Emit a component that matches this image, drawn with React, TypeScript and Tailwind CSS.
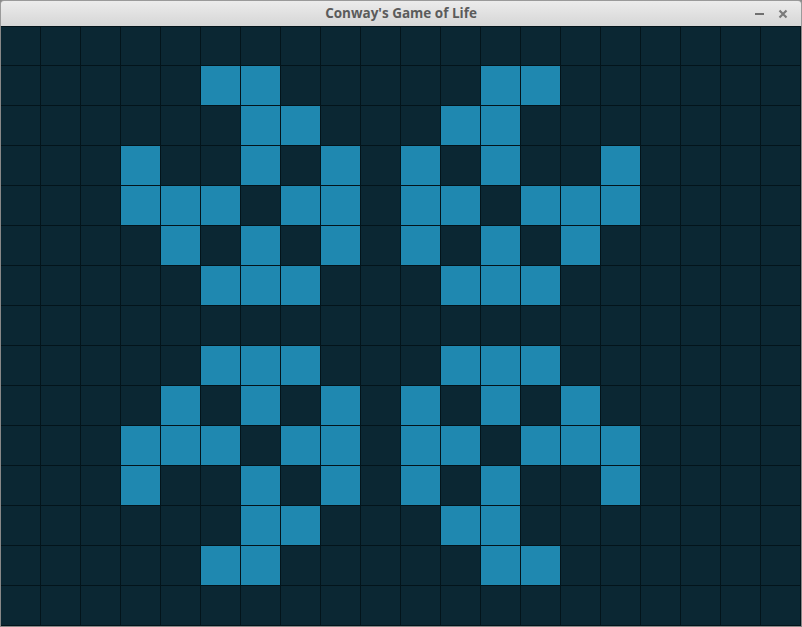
import React from "react";

const alive: Record<number, number[]> = {
  1: [5, 6, 12, 13],
  2: [6, 7, 11, 12],
  3: [3, 6, 8, 10, 12, 15],
  4: [3, 4, 5, 7, 8, 10, 11, 13, 14, 15],
  5: [4, 6, 8, 10, 12, 14],
  6: [5, 6, 7, 11, 12, 13],
  8: [5, 6, 7, 11, 12, 13],
  9: [4, 6, 8, 10, 12, 14],
  10: [3, 4, 5, 7, 8, 10, 11, 13, 14, 15],
  11: [3, 6, 8, 10, 12, 15],
  12: [6, 7, 11, 12],
  13: [5, 6, 12, 13],
};

export default function App() {
  const cells: React.ReactNode[] = [];
  for (let r = 0; r < 15; r++) {
    for (let c = 0; c < 20; c++) {
      const on = (alive[r] || []).includes(c);
      cells.push(
        <div key={`${r}-${c}`} className={on ? "bg-[#1f88b0]" : "bg-[#0b2733]"} />
      );
    }
  }
  return (
    <div className="w-[802px] h-[627px] flex flex-col bg-[#888] overflow-hidden">
      <div className="h-[26px] flex-none relative rounded-t-[4px] border-t border-x border-[#9a9a9a] bg-gradient-to-b from-[#ececec] to-[#d6d6d6] flex items-center justify-center">
        <span
          className="text-[13.5px] font-bold text-[#5b5b5b] leading-none"
          style={{ fontFamily: '"Open Sans", "DejaVu Sans", sans-serif' }}
        >
          Conway's Game of Life
        </span>
        <div className="absolute right-[13px] top-0 h-full flex items-center gap-[14px]">
          <div className="w-[9px] h-[2px] bg-[#707070] mt-[1px]" />
          <svg width="10" height="10" viewBox="0 0 10 10" className="mt-[1px]">
            <path d="M1.5 1.5 L8.5 8.5 M8.5 1.5 L1.5 8.5" stroke="#7a7a7a" strokeWidth="2.2" strokeLinecap="butt" />
          </svg>
        </div>
      </div>
      <div className="flex-none ml-px mb-px w-[800px] h-[600px] bg-[#03141b] pt-px pr-px pb-px">
        <div className="grid grid-cols-[repeat(20,39px)] grid-rows-[38px_repeat(14,39px)] gap-px">
          {cells}
        </div>
      </div>
    </div>
  );
}
